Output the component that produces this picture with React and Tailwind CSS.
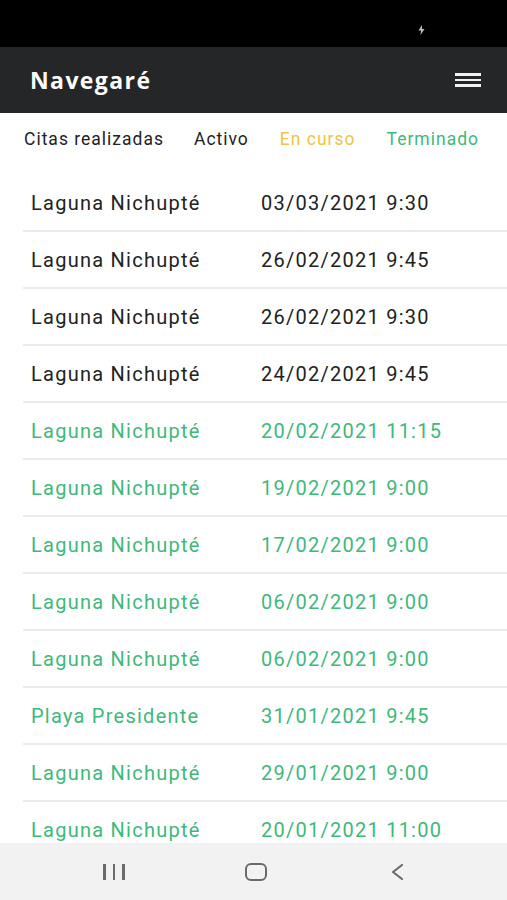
import React from "react";

const rows = [
  ["Laguna Nichupté", "03/03/2021 9:30", false],
  ["Laguna Nichupté", "26/02/2021 9:45", false],
  ["Laguna Nichupté", "26/02/2021 9:30", false],
  ["Laguna Nichupté", "24/02/2021 9:45", false],
  ["Laguna Nichupté", "20/02/2021 11:15", true],
  ["Laguna Nichupté", "19/02/2021 9:00", true],
  ["Laguna Nichupté", "17/02/2021 9:00", true],
  ["Laguna Nichupté", "06/02/2021 9:00", true],
  ["Laguna Nichupté", "06/02/2021 9:00", true],
  ["Playa Presidente", "31/01/2021 9:45", true],
  ["Laguna Nichupté", "29/01/2021 9:00", true],
  ["Laguna Nichupté", "20/01/2021 11:00", true],
];

export default function App() {
  return (
    <div
      className="w-[507px] h-[900px] flex flex-col bg-white overflow-hidden"
      style={{ fontFamily: "Roboto, 'Noto Sans', sans-serif" }}
    >
      <div className="h-[47px] bg-black flex items-center justify-end pr-[82px] shrink-0">
        <svg width="7" height="10" viewBox="0 0 7 10" className="mt-[12px]">
          <path d="M4 0 L0.5 5.5 H3 L2.5 10 L6.5 4 H4 Z" fill="#bdbdbd" />
        </svg>
      </div>
      <div className="h-[66px] bg-[#252628] flex items-center justify-between pl-[30px] pr-[26px] shrink-0">
        <span
          className="text-white text-[23px] font-bold tracking-[1.4px]"
          style={{ fontFamily: "'Open Sans', Roboto, sans-serif" }}
        >
          Navegaré
        </span>
        <div className="flex flex-col gap-[3px] w-[26px]">
          <div className="h-[2.5px] bg-[#f0f0f0]" />
          <div className="h-[2.5px] bg-[#f0f0f0]" />
          <div className="h-[2.5px] bg-[#f0f0f0]" />
        </div>
      </div>
      <div className="flex-1 overflow-hidden">
        <div className="h-[52px] flex items-center pl-[24px] text-[17.5px] tracking-[1px] pt-[1px]">
          <span className="text-[#222222]">Citas realizadas</span>
          <span className="text-[#222222] ml-[30px]">Activo</span>
          <span className="text-[#efc34a] ml-[31px]">En curso</span>
          <span className="text-[#40b87c] ml-[31px]">Terminado</span>
        </div>
        <div className="ml-[23px] mt-[10px]">
          {rows.map(([name, date, done], i) => (
            <div
              key={i}
              className={`h-[57px] flex items-center pl-[8px] border-b-2 border-[#ebebeb] text-[20px] tracking-[1.25px] ${done ? "text-[#40b87c]" : "text-[#222222]"}`}
            >
              <span className="w-[230px] shrink-0">{name}</span>
              <span>{date}</span>
            </div>
          ))}
        </div>
      </div>
      <div className="h-[57px] bg-[#f2f2f2] flex items-center pl-[103px] shrink-0">
        <div className="flex gap-[7px]">
          <div className="w-[2.5px] h-[16px] bg-[#6b6b6b]" />
          <div className="w-[2.5px] h-[16px] bg-[#6b6b6b]" />
          <div className="w-[2.5px] h-[16px] bg-[#6b6b6b]" />
        </div>
        <div className="ml-[120px] w-[22px] h-[18px] rounded-[6px] border-[2.5px] border-[#6b6b6b]" />
        <svg width="14" height="18" viewBox="0 0 14 18" className="ml-[123px]">
          <path d="M12 2 L3 9 L12 16" fill="none" stroke="#6b6b6b" strokeWidth="2.2" strokeLinecap="round" strokeLinejoin="round" />
        </svg>
      </div>
    </div>
  );
}
